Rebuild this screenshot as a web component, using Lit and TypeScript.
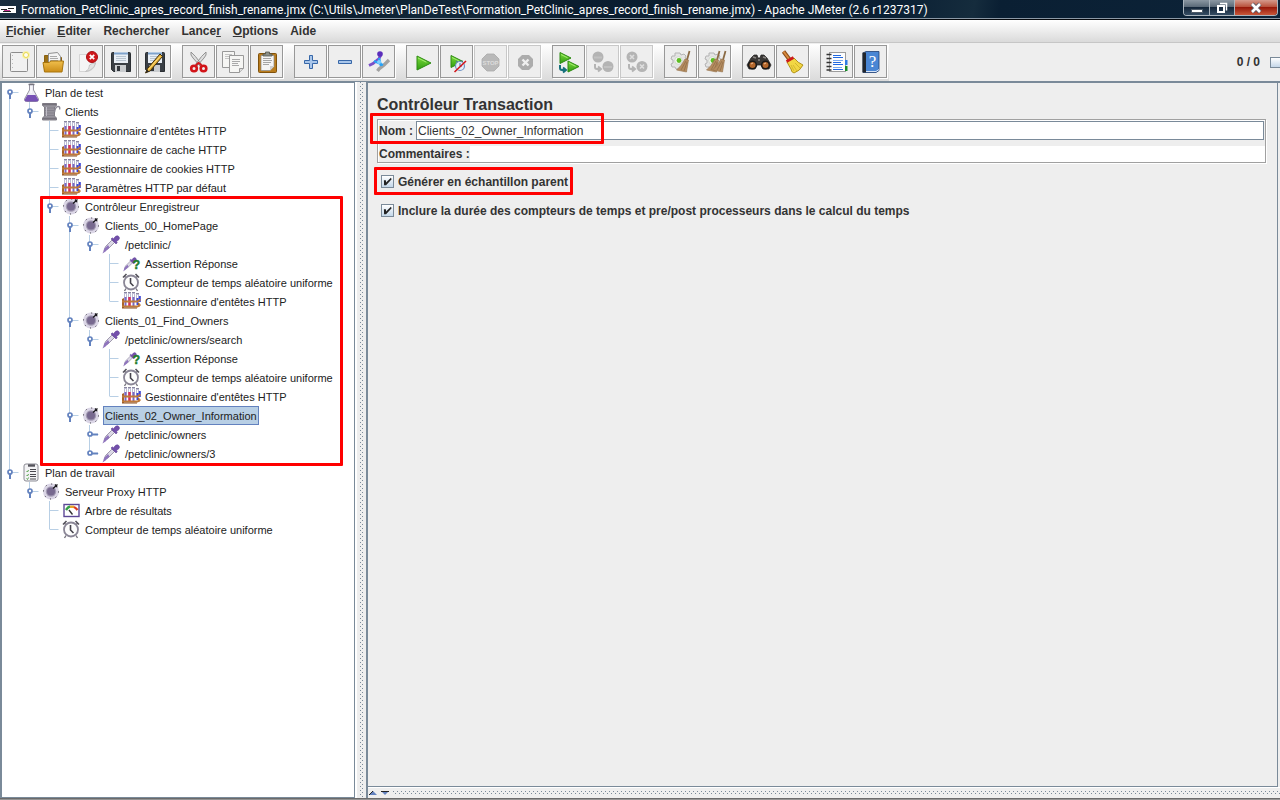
import { LitElement, html, css, svg, nothing, SVGTemplateResult } from "lit";
import { customElement, property } from "lit/decorators.js";

type Art = SVGTemplateResult;

const page = (x: number, y: number, w: number, h: number) => svg`
  <path d="M${x + 0.5} ${y + 0.5}h${w}v${h - 4}l-4 4h${4 - w}z" fill="#f6f6f4" stroke="#999"/>
  <path d="M${x + w - 3.5} ${y + h + 0.5}v-4h4" fill="#ddd" stroke="#999"/>`;

const floppy = svg`
  <path d="M7.500 8.500q0-1 1-1h17q1 0 1 1v18h-17l-2-2z" fill="#3a3f45" stroke="#2b2f33"/>
  <rect x="10" y="7" width="14" height="11" fill="#e9eff6"/>
  <path d="M10 8.500h14" stroke="#7fa3cc" stroke-width="2"/>
  <path d="M12 11.500h10M12 13.500h10M12 15.500h10" stroke="#b8c4d0"/>
  <rect x="11" y="20" width="11" height="7" fill="#c9cccf"/>
  <rect x="13" y="21" width="3" height="5" fill="#33373c"/>`;

const hook = (x: number, y: number) => svg`
  <path d="M${x} ${y}v3q0 2 2 2h3M${x + 3} ${y + 2.5}l3 2.500l-3 2.500" fill="none" stroke="currentColor" stroke-width="2"/>`;

const play = (x: number, y: number, s: number) => svg`
  <path d="M${x} ${y}l${s} ${s / 2}l${-s} ${s / 2}z" fill="url(#go)" stroke="#2c8a12" stroke-width="1"/>
  <path d="M${x + 1} ${y + 2}l${s * 0.6} ${s * 0.3}" stroke="#a4ee70" stroke-width="1"/>`;

const gear = svg`
  <path d="M11 8h5l1 2l3-1l2 2l-1 2l2 1v3l-2 1l1 2l-2 2h-3l-1 2h-4l-1-2h-3l-1-3l2-1v-3l-2-1l1-3h3z" fill="#e4e4e4" stroke="#b4b4b4"/>
  <circle cx="14.500" cy="15.500" r="3.800" fill="#f2f6ee" stroke="#c3cabd" stroke-width=".6"/><circle cx="15" cy="15.500" r="2.400" fill="#5dbd22"/>`;

const besom = (dx: number) => svg`
  <g transform="translate(${dx} 0)">
    <path d="M25.500 6l-2.500 9" stroke="#8a6a44" stroke-width="1.800"/>
    <path d="M21 14l3.500 1l-2 12l-10-2q5-4 8.500-11z" fill="#b58d60" stroke="#94704a" stroke-width=".6"/>
    <path d="M22 16l-5 9M23 17l-3 9" stroke="#8d6a45" stroke-width=".7"/>
  </g>`;

const tools: Record<string, Art> = {
  nouveau: svg`
    <rect x="8.500" y="7.500" width="17" height="19" rx="1" fill="#f1f1f1" stroke="#8d8d8d"/>
    <path d="M10.500 10v15" stroke="#bbb" stroke-dasharray="1 3"/>
    <circle cx="24" cy="10" r="4" fill="#f8f1b0"/><circle cx="24" cy="10" r="2.500" fill="#fffdf0" stroke="#e8d94c"/>`,
  ouvrir: svg`
    <path d="M8.500 10.500h4l1 2h12v13h-17z" fill="#9a6f16" stroke="#8a6110"/>
    <path d="M12.500 8.500l9-1l3 4v8h-12z" fill="#f4f4f4" stroke="#8f8f8f"/>
    <path d="M14 11.500h7M14 13.500h8M14 15.500h8" stroke="#aaa"/>
    <path d="M7 17.500h6l2-1.500h12.500l-1.500 11h-17.500z" fill="url(#gold)" stroke="#a8750c"/>`,
  fermer: svg`
    <path d="M9.500 9.500h16v9q-2 8-10 8h-6z" fill="#f5f5f5" stroke="#cdcdcd" stroke-width=".8"/>
    <path d="M25.500 18q-4 0-6 2q0 5-4 6.500q8-1 10-8.500z" fill="#e2e2e2" stroke="#b5b5b5" stroke-width=".7"/>
    <circle cx="22" cy="12" r="5.500" fill="#d0171b" stroke="#a80f12"/>
    <path d="M19.800 9.800l4.400 4.400M24.200 9.800l-4.400 4.400" stroke="#fff" stroke-width="1.800"/>`,
  enregistrer: floppy,
  enregistrerSous: svg`${floppy}
    <path d="M22 9l-12.500 14.500l-2 4.500l4.500-2l12.500-14.500z" fill="#e9b336" stroke="#3d2d0c"/>
    <path d="M22 11.500l-11.500 13" stroke="#fbe08a"/><path d="M8 27.500l1-3l2 2z" fill="#222"/>`,
  couper: svg`
    <path d="M9 7q-1 3 2 6l7 8l1.500-1.500l-6-8zM24 7q1 3-2 6l-7 8l-1.500-1.500l6-8z" fill="#dedede" stroke="#8a8a8a" stroke-width=".9"/>
    <ellipse cx="12" cy="23.500" rx="2.800" ry="2.800" fill="#eee" stroke="#d21419" stroke-width="2.600"/>
    <ellipse cx="21.500" cy="23.500" rx="2.800" ry="2.800" fill="#eee" stroke="#d21419" stroke-width="2.600"/>
    <path d="M14 20l2.500-2l3 2" stroke="#d21419" stroke-width="2" fill="none"/>`,
  copier: svg`${page(6, 6, 12, 16)}<path d="M9 9.500h7M9 11.500h7M9 13.500h5" stroke="#c4c4c4"/>
    ${page(13, 10, 14, 17)}<path d="M16 14.500h8M16 16.500h8M16 18.500h6M16 20.500h7" stroke="#a9a9a9"/>`,
  coller: svg`
    <rect x="8.500" y="8.500" width="18" height="19" rx="1" fill="#b97c1d" stroke="#80520c"/>
    <path d="M11 10.500h13v11l-4 4h-9z" fill="#f5f5f5" stroke="#8b8b8b" stroke-width=".7"/>
    <path d="M13 13.500h8M13 15.500h9M13 17.500h8M13 19.500h6" stroke="#a5a5a5"/>
    <path d="M24 21l-4 4.500v-4.500z" fill="#cfcfcf"/>
    <path d="M13 11v-2h2.500v-2h4v2h2.500v2z" fill="#8c8f88" stroke="#52554f" stroke-width=".8"/>`,
  deplier: svg`<path d="M15.500 10.500h3v5h5v3h-5v5h-3v-5h-5v-3h5z" fill="#a9c6ea" stroke="#3767a8"/>`,
  replier: svg`<path d="M10.500 15.500h13v3h-13z" fill="#a9c6ea" stroke="#3767a8"/>`,
  activer: svg`
    <path d="M27 15l-5 5l-5 4l-1.500 2" stroke="#a2a2a2" stroke-width="3.400" fill="none"/>
    <path d="M19 9.500l-2 4l-6 5l-4 2" stroke="#7a50c8" stroke-width="2.800" fill="none"/>
    <circle cx="18" cy="9" r="2.800" fill="#5b2dbb"/>
    <path d="M12 16l9 4M17 13l2 8" stroke="#29a2f5" stroke-width="2.400"/>
    <circle cx="17" cy="17" r="2" fill="#7fd0ff"/>`,
  demarrer: play(11, 11, 14),
  demarrerSansPause: svg`${play(11, 10.5, 12)}
    <circle cx="20" cy="21" r="4.500" fill="#e6eef8" stroke="#6f93c4" stroke-width="1.200"/>
    <path d="M20 18v3h2M16 16l1.500 1M22 15.500l-1 1" stroke="#456ea8" fill="none"/>
    <path d="M26 16l-11.500 11" stroke="#d1161a" stroke-width="1.600"/>`,
  arreter: svg`
    <path d="M13 9h7l5 5v7l-5 5h-7l-5-5v-7z" fill="#b9b9b9" stroke="#a9a9a9" stroke-width=".8"/>
    <text x="16.500" y="20" font-size="6" font-weight="bold" fill="#dcdcdc" text-anchor="middle" font-family="Liberation Sans, sans-serif">STOP</text>`,
  interrompre: svg`
    <path d="M14 10h7l4 4v7l-4 4h-7l-4-4v-7z" fill="#adadad"/>
    <path d="M14.500 14.500l6 6M20.500 14.500l-6 6" stroke="#f0f0f0" stroke-width="2.400"/>`,
  demarrerDistant: svg`${play(8, 7.5, 11)}${play(16, 16, 11)}<g color="#15707c">${hook(8, 20)}</g>`,
  arreterDistant: svg`<g color="#b4b4b4"><circle cx="12" cy="12" r="5.500" fill="#b4b4b4"/><circle cx="22" cy="21.500" r="5.500" fill="#b4b4b4"/>
    <path d="M8 12.500h8M18 22h8" stroke="#c2c2c2" stroke-width="2"/>${hook(9, 19)}</g>`,
  interrompreDistant: svg`<g color="#b4b4b4"><circle cx="12" cy="12" r="5.500" fill="#b4b4b4"/><circle cx="22" cy="21.500" r="5.500" fill="#b4b4b4"/>
    <path d="M10 10l4 4M14 10l-4 4M20 19.500l4 4M24 19.500l-4 4" stroke="#dedede" stroke-width="1.600"/>${hook(9, 19)}</g>`,
  nettoyer: svg`${gear}${besom(0)}`,
  nettoyerTout: svg`${gear}${besom(-4)}${besom(2)}`,
  rechercher: svg`
    <path d="M9 13l3-3h3l1 3h2l1-3h3l3 3l4 7l-2 4h-6l-2-4h-4l-2 4h-6l-2-4z" fill="#3a3836" stroke="#1e1d1c" stroke-width=".7"/>
    <path d="M11 12l3 1M21 12l3 1M16 15h2" stroke="#8b8784" stroke-width="1.400"/>
    <circle cx="10.500" cy="20" r="3.800" fill="#b3672c" stroke="#191817" stroke-width="1.500"/>
    <circle cx="23.500" cy="20" r="3.800" fill="#b3672c" stroke="#191817" stroke-width="1.500"/>
    <path d="M9 19l2-1M22 19l2-1" stroke="#e7b489" stroke-width="1.200"/>`,
  balayer: svg`
    <path d="M7.500 6.500l6 8" stroke="#8a4c18" stroke-width="4"/><path d="M7.500 6.500l6 8" stroke="#d98a3d" stroke-width="2"/>
    <path d="M11 17l7-4q4 5 9 7q-3 6-9 8q-3-1-3-4q-2-3-4-7z" fill="#f2d744" stroke="#a98a10" stroke-width=".9"/>
    <path d="M17 20l4 6M19 18l5 5M15 20l3 6" stroke="#cdb02a" stroke-width=".8"/>
    <path d="M10.500 16.500l7-4" stroke="#cc1a1a" stroke-width="2.600"/>`,
  journal: svg`
    <rect x="9.500" y="7.500" width="16" height="19" fill="#fdfdfd" stroke="#9c9c9c"/>
    <path d="M13 10.500h8M13 12.500h10M13 17.500h8M13 19.500h10M13 24.500h10" stroke="#2168e0" stroke-width="1.200"/>
    <path d="M13 15.500h10M13 22.500h9" stroke="#7aa8ee"/>
    <path d="M6.500 9.500h5M6.500 13.500h5M6.500 17.500h5M6.500 21.500h5M6.500 25h5" stroke="#333" stroke-width="1.400"/>
    <rect x="25" y="15" width="2.500" height="5" fill="#2c7be5"/><rect x="25" y="21" width="2.500" height="5" fill="#188a28"/>`,
  aide: svg`
    <path d="M9 8l3-1.500h13v19l-3 2h-13z" fill="#4a86d4" stroke="#1f3f73" stroke-width=".8"/>
    <path d="M8.500 7.500h3.500v20h-3.500z" fill="#22262d"/><path d="M12 26.500h10l3-2" stroke="#d8e4f4" fill="none"/>
    <text x="18.500" y="22" font-size="17" fill="#fff" text-anchor="middle" font-family="Liberation Serif, serif">?</text>`,
};

const groups: [string, string][][] = [
  [["nouveau", "Nouveau"], ["ouvrir", "Ouvrir"], ["fermer", "Fermer"], ["enregistrer", "Enregistrer"], ["enregistrerSous", "Enregistrer sous"]],
  [["couper", "Couper"], ["copier", "Copier"], ["coller", "Coller"]],
  [["deplier", "Tout déplier"], ["replier", "Tout replier"], ["activer", "Activer / Désactiver"]],
  [["demarrer", "Démarrer"], ["demarrerSansPause", "Démarrer sans pause"], ["arreter", "Arrêter"], ["interrompre", "Interrompre"]],
  [["demarrerDistant", "Démarrer à distance"], ["arreterDistant", "Arrêter à distance"], ["interrompreDistant", "Interrompre à distance"]],
  [["nettoyer", "Nettoyer"], ["nettoyerTout", "Nettoyer tout"]],
  [["rechercher", "Rechercher"], ["balayer", "Effacer la recherche"]],
  [["journal", "Journal"], ["aide", "Aide"]],
];
const disabledTools = new Set(["arreter", "interrompre", "arreterDistant", "interrompreDistant"]);

const pipette = svg`
  <path d="M3 15.500l1.500-4l6.500-6.500l2.500 2.500l-6.500 6.500z" fill="#dcd9e6" stroke="#8b859c" stroke-width=".8"/>
  <path d="M1.500 18.500l2-5l3.500-3.500l1.500 2.500l-4 4z" fill="#8f74bd"/>
  <path d="M10 4l5 5l1.300-1.300l-.8-1.200l2.500-2q1.200-1.500-.2-3t-3.200-.2l-2.200 2.500l-1.200-1z" fill="#7350ab" stroke="#5a3f91" stroke-width=".5"/>`;

const nodeArt: Record<string, Art> = {
  flask: svg`
    <path d="M8.500 1v6l-5 9q0 2.500 2 2.500h10q2 0 2-2.500l-5-9v-6z" fill="#ececf4" stroke="#8c8a96" stroke-width=".9"/>
    <path d="M6.500 12h8l3 5q0 1.500-2 1.500h-10q-2 0-2-1.500z" fill="#7650b4"/>
    <path d="M7.500 1.500h6" stroke="#77757f" stroke-width="1.400"/><path d="M10 3v7" stroke="#fff"/>`,
  spool: svg`
    <path d="M1.500 1.500h14v2l-2 1.500v9l2 2v2h-14v-2l2-2v-9l-2-1.500z" fill="#96939c" stroke="#77747e" stroke-width=".9"/>
    <path d="M4 6h9M4 8.500h9M4 11h9M4 13.500h9" stroke="#85828d"/><path d="M5.500 5v9" stroke="#c0bdc8"/>
    <path d="M2 2.500h13M2 16.500h13" stroke="#75727b" stroke-width="1.400"/>
    <path d="M13.500 10q1-5.500 3.500-5.500t1.500 3" stroke="#8a8794" fill="none" stroke-width="1.400"/>`,
  rack: svg`
    <path d="M4.500 1v8M8.500 1v8M12.500 1v8M16.500 2v8" stroke="#bcbcd2" stroke-width="3"/>
    <path d="M4.500 2v4M8.500 2v4M12.500 2v4M16.500 3v4" stroke="#fff"/>
    <path d="M4.500 5v9M12.500 5v9" stroke="#7a68c4" stroke-width="2"/><path d="M8.500 5v9" stroke="#d8315a" stroke-width="2.600"/>
    <path d="M16.500 6v7M18.800 4v6" stroke="#3b46d8" stroke-width="2"/>
    <path d="M3 .500h3M7 .500h3M11 .500h3M15 1.500h3" stroke="#8a86a0"/>
    <path d="M1 7l2-1v10h-2zM17 11h1.500v4h-1.500z" fill="#a96328"/>
    <path d="M1 9.500h15.500l3-2M1 14.500h15.500l3-2" stroke="#c07a3a" stroke-width="2" fill="none"/>
    <path d="M1 16h15" stroke="#8b4f1e"/>`,
  dial: svg`
    <circle cx="10" cy="9.500" r="8" fill="#dbd6e6"/>
    <circle cx="10" cy="9.500" r="7.500" fill="none" stroke="#28262d" stroke-dasharray="1 4.890"/>
    <circle cx="10" cy="9.500" r="5.200" fill="#a39bb4"/>
    <circle cx="10" cy="9.500" r="4" fill="#77698f"/>
    <path d="M12 6.500l4.500-4M14 2.500l2 2.500" stroke="#18171b" stroke-width="1.300"/>`,
  pipette,
  assertion: svg`
    <g transform="translate(1 3) scale(.78)">${pipette}</g>
    <text x="15.500" y="15" font-size="12" font-weight="bold" fill="#1f7d2c" stroke="#1f7d2c" stroke-width=".5" text-anchor="middle" font-family="Liberation Sans, sans-serif">?</text>`,
  clock: svg`
    <path d="M2 4.500l3.500-3.500M14.500 1l3.500 3.500M3.500 3l2 2M16.500 3l-2 2" stroke="#55535c" stroke-width="1.600"/>
    <path d="M5 15.500l-1.500 2.500M15 15.500l1.500 2.500" stroke="#77747f" stroke-width="1.400"/>
    <circle cx="10" cy="9.500" r="7" fill="#fdfdfd" stroke="#8a8696" stroke-width="1.800"/>
    <path d="M9.500 5v5l3 3" stroke="#45434c" fill="none" stroke-width="1.600"/>`,
  clipboard: svg`
    <rect x="3" y="1" width="14" height="17" rx="2" fill="#f3f3f5" stroke="#8b8b94"/>
    <path d="M7 2.500h7" stroke="#55545c" stroke-width="2.400"/>
    <path d="M9 6.500h6M9 8.500h6M9 11.500h6M9 13.500h6M9 16h6" stroke="#4b4a51"/>
    <path d="M5.500 8l1 1l1-2M5.500 12l1 1l1-2M5.500 15.500l1 1l1-2" stroke="#58a34e" fill="none"/>`,
  gauge: svg`
    <rect x="3" y="3.500" width="15" height="12" fill="#fff" stroke="#5d4796" stroke-width="1.400"/>
    <path d="M5 9q2-3 4-3.500" stroke="#35a046" stroke-width="2.400" fill="none"/>
    <path d="M9 5.800h4" stroke="#e6a52c" stroke-width="2.400"/><path d="M13 6q2 1 3.500 3" stroke="#dd3b22" stroke-width="2.400" fill="none"/>
    <path d="M8 9l3.500 4.500" stroke="#333" stroke-width="1.400"/>`,
};

type Row = { depth: number; icon: string; text: string; handle?: "open" | "closed"; selected?: boolean };
const rows: Row[] = [
  { depth: 0, icon: "flask", text: "Plan de test", handle: "open" },
  { depth: 1, icon: "spool", text: "Clients", handle: "open" },
  { depth: 2, icon: "rack", text: "Gestionnaire d'entêtes HTTP" },
  { depth: 2, icon: "rack", text: "Gestionnaire de cache HTTP" },
  { depth: 2, icon: "rack", text: "Gestionnaire de cookies HTTP" },
  { depth: 2, icon: "rack", text: "Paramètres HTTP par défaut" },
  { depth: 2, icon: "dial", text: "Contrôleur Enregistreur", handle: "open" },
  { depth: 3, icon: "dial", text: "Clients_00_HomePage", handle: "open" },
  { depth: 4, icon: "pipette", text: "/petclinic/", handle: "open" },
  { depth: 5, icon: "assertion", text: "Assertion Réponse" },
  { depth: 5, icon: "clock", text: "Compteur de temps aléatoire uniforme" },
  { depth: 5, icon: "rack", text: "Gestionnaire d'entêtes HTTP" },
  { depth: 3, icon: "dial", text: "Clients_01_Find_Owners", handle: "open" },
  { depth: 4, icon: "pipette", text: "/petclinic/owners/search", handle: "open" },
  { depth: 5, icon: "assertion", text: "Assertion Réponse" },
  { depth: 5, icon: "clock", text: "Compteur de temps aléatoire uniforme" },
  { depth: 5, icon: "rack", text: "Gestionnaire d'entêtes HTTP" },
  { depth: 3, icon: "dial", text: "Clients_02_Owner_Information", handle: "open", selected: true },
  { depth: 4, icon: "pipette", text: "/petclinic/owners", handle: "closed" },
  { depth: 4, icon: "pipette", text: "/petclinic/owners/3", handle: "closed" },
  { depth: 0, icon: "clipboard", text: "Plan de travail", handle: "open" },
  { depth: 1, icon: "dial", text: "Serveur Proxy HTTP", handle: "open" },
  { depth: 2, icon: "gauge", text: "Arbre de résultats" },
  { depth: 2, icon: "clock", text: "Compteur de temps aléatoire uniforme" },
];

/** True when another sibling at this depth follows before the branch closes. */
const continues = (index: number, depth: number): boolean => {
  for (let i = index + 1; i < rows.length; i++) {
    if (rows[i].depth < depth) return false;
    if (rows[i].depth === depth) return true;
  }
  return false;
};

@customElement("jm-toolbar")
export class JmToolbar extends LitElement {
  static styles = css`
    :host { display: flex; align-items: center; height: 38px; background: #eee; font: bold 12px "Liberation Sans", Arial, sans-serif; color: #333; overflow: hidden; }
    .strip { display: flex; gap: 11px; height: 37px; box-sizing: border-box; padding: 1px 2px 0 2px; background: linear-gradient(#fff, #dadada); }
    .group { display: flex; gap: 1px; }
    button { box-sizing: border-box; width: 33px; height: 33px; padding: 0; border: 1px solid #989898; background: #eee; box-shadow: 1px 1px 0 #fff; }
    button:disabled { border-color: #c8c8c8; }
    svg { display: block; }
    .count { margin-left: auto; }
    .lamp { box-sizing: border-box; width: 10px; height: 11px; margin-left: 10px; border: 1px solid #7a8a99; border-right: 0; background: linear-gradient(#fff, #c4d6e8); }
  `;
  render() {
    return html`
      <div class="strip" role="toolbar">
        ${groups.map((g) => html`<div class="group">${g.map(([id, label]) => html`
          <button aria-label=${label} ?disabled=${disabledTools.has(id)}>
            <svg width="31" height="31" viewBox="1 1 31 31" fill="none">
              <defs>
                <linearGradient id="go" x1="0" y1="0" x2="0" y2="1"><stop offset="0" stop-color="#7ddb3c"/><stop offset="1" stop-color="#2f9d10"/></linearGradient>
                <linearGradient id="gold" x1="0" y1="0" x2="0" y2="1"><stop offset="0" stop-color="#f0bf4d"/><stop offset="1" stop-color="#cb8d17"/></linearGradient>
              </defs>
              ${tools[id]}
            </svg>
          </button>`)}</div>`)}
      </div>
      <span class="count">0 / 0</span><span class="lamp"></span>`;
  }
}

@customElement("jm-tree")
export class JmTree extends LitElement {
  static styles = css`
    :host { display: block; font: 11px/19px "Liberation Sans", Arial, sans-serif; color: #222; }
    .row { display: flex; height: 19px; white-space: nowrap; }
    .rail { flex: none; }
    .icon { flex: none; margin-right: 2px; }
    .text { box-sizing: border-box; height: 19px; padding: 0 1px; border: 1px solid transparent; line-height: 18px; }
    .selected { border-color: #6382bf; background: #b8cfe5; }
  `;
  private rail(i: number) {
    const { depth, handle } = rows[i];
    const x = (d: number) => d * 20 + 7.5;
    const lines = [];
    for (let d = 0; d < depth; d++) if (continues(i, d)) lines.push(svg`<path d="M${x(d)} 0v19"/>`);
    if (i > 0) lines.push(svg`<path d="M${x(depth)} 0v9"/>`);
    if (continues(i, depth)) lines.push(svg`<path d="M${x(depth)} 9v10"/>`);
    lines.push(svg`<path d="M${x(depth)} 9.500h9"/>`);
    const cx = x(depth) + 0.5;
    return html`<svg class="rail" width=${depth * 20 + 19} height="19" fill="none" stroke="#b8cfe5">
      ${lines}
      ${handle === "open" ? svg`<path d="M${cx} 11v5" stroke="#6382bf" stroke-width="2"/>` : nothing}
      ${handle === "closed" ? svg`<path d="M${cx + 2} 9.500h6" stroke="#6382bf" stroke-width="2"/>` : nothing}
      ${handle ? svg`<circle cx=${cx} cy="9" r="2" fill="#fff" stroke="#6382bf" stroke-width="1.700"/>` : nothing}
    </svg>`;
  }
  render() {
    return html`<div role="tree">${rows.map((r, i) => html`
      <div class="row" role="treeitem" aria-level=${r.depth + 1} aria-selected=${r.selected ? "true" : "false"}>
        ${this.rail(i)}
        <svg class="icon" width="20" height="19" viewBox="0 0 20 19" fill="none">${nodeArt[r.icon]}</svg>
        <span class="text ${r.selected ? "selected" : ""}">${r.text}</span>
      </div>`)}</div>`;
  }
}

@customElement("jm-check")
export class JmCheck extends LitElement {
  @property() label = "";
  static styles = css`
    :host { display: block; }
    label { display: inline-flex; align-items: center; gap: 4px; height: 15px; }
    input { appearance: none; display: grid; place-items: center; box-sizing: border-box; width: 13px; height: 13px; margin: 0; border: 1px solid #7a8a99; background: linear-gradient(#fff, #c4d8ea); }
    input:checked::before { content: ""; width: 9px; height: 9px; background: #222; clip-path: polygon(10% 35%, 32% 35%, 34% 62%, 88% 8%, 96% 24%, 34% 92%, 12% 92%); }
  `;
  render() {
    return html`<label><input type="checkbox" checked />${this.label}</label>`;
  }
}

@customElement("app-root")
export class AppRoot extends LitElement {
  static styles = css`
    :host { display: flex; flex-direction: column; height: 100vh; overflow: hidden; background: #eee; font: bold 12px "Liberation Sans", Arial, sans-serif; color: #333; }
    .title { display: flex; align-items: center; box-sizing: border-box; height: 20px; border-bottom: 1px solid #05080c; box-shadow: inset 0 -1px 0 #8b98a5; background: linear-gradient(100deg, #1c2f40 0%, #0a1c2d 9%, #0a1c2d 26%, #12283a 34%, #0a1d2f 44%, #0b2034 70%, #152c3d 76%, #0a1f33 78%, #0c2338 100%); color: #fff; font: 12px Roboto, "Open Sans", sans-serif; white-space: nowrap; }
    .logo { flex: none; margin-right: 5px; }
    .window { display: flex; align-self: flex-start; margin: 0 2px 0 auto; border: 1px solid #aab4bd; border-top: 0; border-radius: 0 0 4px 4px; overflow: hidden; }
    .window button { display: grid; place-items: center; height: 15px; padding: 0; border: 0; border-right: 1px solid #aab4bd; background: linear-gradient(#8b97a2, #5b6a78 45%, #14263a 50%, #364d63); }
    .window .min { width: 26px; }
    .window .max { width: 25px; }
    .window .close { width: 42px; border-right: 0; background: linear-gradient(#d59a8c, #b9523c 45%, #98190a 50%, #c9583a); }
    .menu { display: flex; gap: 12px; box-sizing: border-box; height: 23px; padding: 0 6px; border-bottom: 1px solid #c6c6c6; background: linear-gradient(#fff, #dadada); line-height: 21px; }
    .menu button { padding: 0; border: 0; background: none; color: inherit; font: inherit; }
    .body { display: flex; flex: 1; min-height: 0; border-top: 1px solid #7a8a99; }
    .left { position: relative; flex: 0 0 352px; border: solid #7a8a99; border-width: 1px 1px 1px 2px; background: #fff; }
    .split { display: flex; flex: none; width: 11px; box-sizing: border-box; border-left: 2px solid #fff; padding-left: 3px; background: #eee; }
    .dots { --dot: conic-gradient(from 270deg at 1px 1px, #7a8a99 90deg, transparent 0); background: var(--dot) 0 0 / 4px 4px, var(--dot) 2px 2px / 4px 4px; }
    .split .dots { width: 4px; }
    .right { display: flex; flex: 1; flex-direction: column; min-width: 0; border-left: 2px solid #7a8a99; border-top: 1px solid #7a8a99; }
    .panel { flex: 1; margin-right: 2px; padding: 12px 11px 0 9px; border-right: 1px solid #7a8a99; border-bottom: 1px solid #7a8a99; }
    h1 { margin: 0 0 5px; font-size: 16px; line-height: 19px; }
    .form { position: relative; border: 1px solid #a0a0a0; box-shadow: 1px 1px 0 #fff, inset 1px 1px 0 #fff; }
    .field { display: flex; align-items: center; height: 21px; padding: 0 1px; }
    .field input { flex: 1; box-sizing: border-box; min-width: 0; height: 19px; margin: 0 0 0 3px; padding: 0 1px; border: 1px solid #7a8a99; background: #fff; color: #333; font: 12px "Liberation Sans", Arial, sans-serif; outline: 0; }
    .notes { height: 17px; margin-top: 4px; padding-right: 0; }
    .notes input { height: 16px; margin-left: 0; border: 0; }
    .checks { position: relative; display: grid; gap: 14px; padding: 11px 4px 0; }
    .mark { position: absolute; border: 3px solid #f00; border-radius: 1px; pointer-events: none; }
    .mark-tree { left: 38px; top: 113px; width: 297px; height: 264px; }
    .mark-name { left: -8px; top: -7px; width: 228px; height: 25px; }
    .mark-check { left: -3px; top: 4px; width: 193px; height: 22px; }
    .dock { display: flex; gap: 4px; height: 6px; padding: 3px 0 1px 1px; border-top: 1px solid #fff; }
    .dock .dots { flex: 1; height: 4px; }
    .arrows { flex: none; }
    .edge { height: 2px; background: linear-gradient(#555, #aaa); }
  `;
  render() {
    return html`
      <header class="title">
        <svg class="logo" width="16" height="8" viewBox="0 0 16 8"><path fill="#fff" d="M0 0h16v7H0z"/><path d="M1 3.500h6M8 2.500h6M3 5.500h8" stroke="#222"/><path d="M4 4.500h6" stroke="#c2338f"/></svg>
        <span>Formation_PetClinic_apres_record_finish_rename.jmx (C:\\Utils\\Jmeter\\PlanDeTest\\Formation_PetClinic_apres_record_finish_rename.jmx) - Apache JMeter (2.6 r1237317)</span>
        <div class="window">
          <button class="min" aria-label="Réduire"><svg width="12" height="12"><path d="M.500 7.500h11v3h-11z" fill="#fff" stroke="#4b5866"/></svg></button>
          <button class="max" aria-label="Restaurer"><svg width="12" height="12" fill="none"><path d="M4 1.500h6.500v7" stroke="#fff" stroke-width="1.500"/><rect x="2" y="4" width="6" height="6" stroke="#fff" stroke-width="2"/></svg></button>
          <button class="close" aria-label="Fermer"><svg width="12" height="12"><path d="M2 2l8 8M10 2l-8 8" stroke="#5a5a66" stroke-width="4.500"/><path d="M2 2l8 8M10 2l-8 8" stroke="#fff" stroke-width="2.600"/></svg></button>
        </div>
      </header>
      <nav class="menu">
        <button><u>F</u>ichier</button><button><u>E</u>diter</button><button>Rechercher</button><button>Lance<u>r</u></button><button><u>O</u>ptions</button><button>Aide</button>
      </nav>
      <jm-toolbar></jm-toolbar>
      <main class="body">
        <section class="left"><jm-tree></jm-tree><div class="mark mark-tree"></div></section>
        <div class="split"><div class="dots"></div></div>
        <section class="right">
          <div class="panel">
            <h1>Contrôleur Transaction</h1>
            <div class="form">
              <div class="field"><label for="nom">Nom :</label><input id="nom" value="Clients_02_Owner_Information" /></div>
              <div class="field notes"><label for="notes">Commentaires :</label><input id="notes" /></div>
              <div class="mark mark-name"></div>
            </div>
            <div class="checks">
              <jm-check label="Générer en échantillon parent"></jm-check>
              <jm-check label="Inclure la durée des compteurs de temps et pre/post processeurs dans le calcul du temps"></jm-check>
              <div class="mark mark-check"></div>
            </div>
          </div>
          <div class="dock">
            <svg class="arrows" width="20" height="5"><path d="M0 4l4-4l4 4z" fill="#6382bf"/><path d="M0 4l4-4" stroke="#222"/><path d="M12 0h8l-4 4z" fill="#6382bf"/><path d="M12 .500h8" stroke="#222"/></svg>
            <div class="dots"></div>
          </div>
        </section>
      </main>
      <div class="edge"></div>`;
  }
}
